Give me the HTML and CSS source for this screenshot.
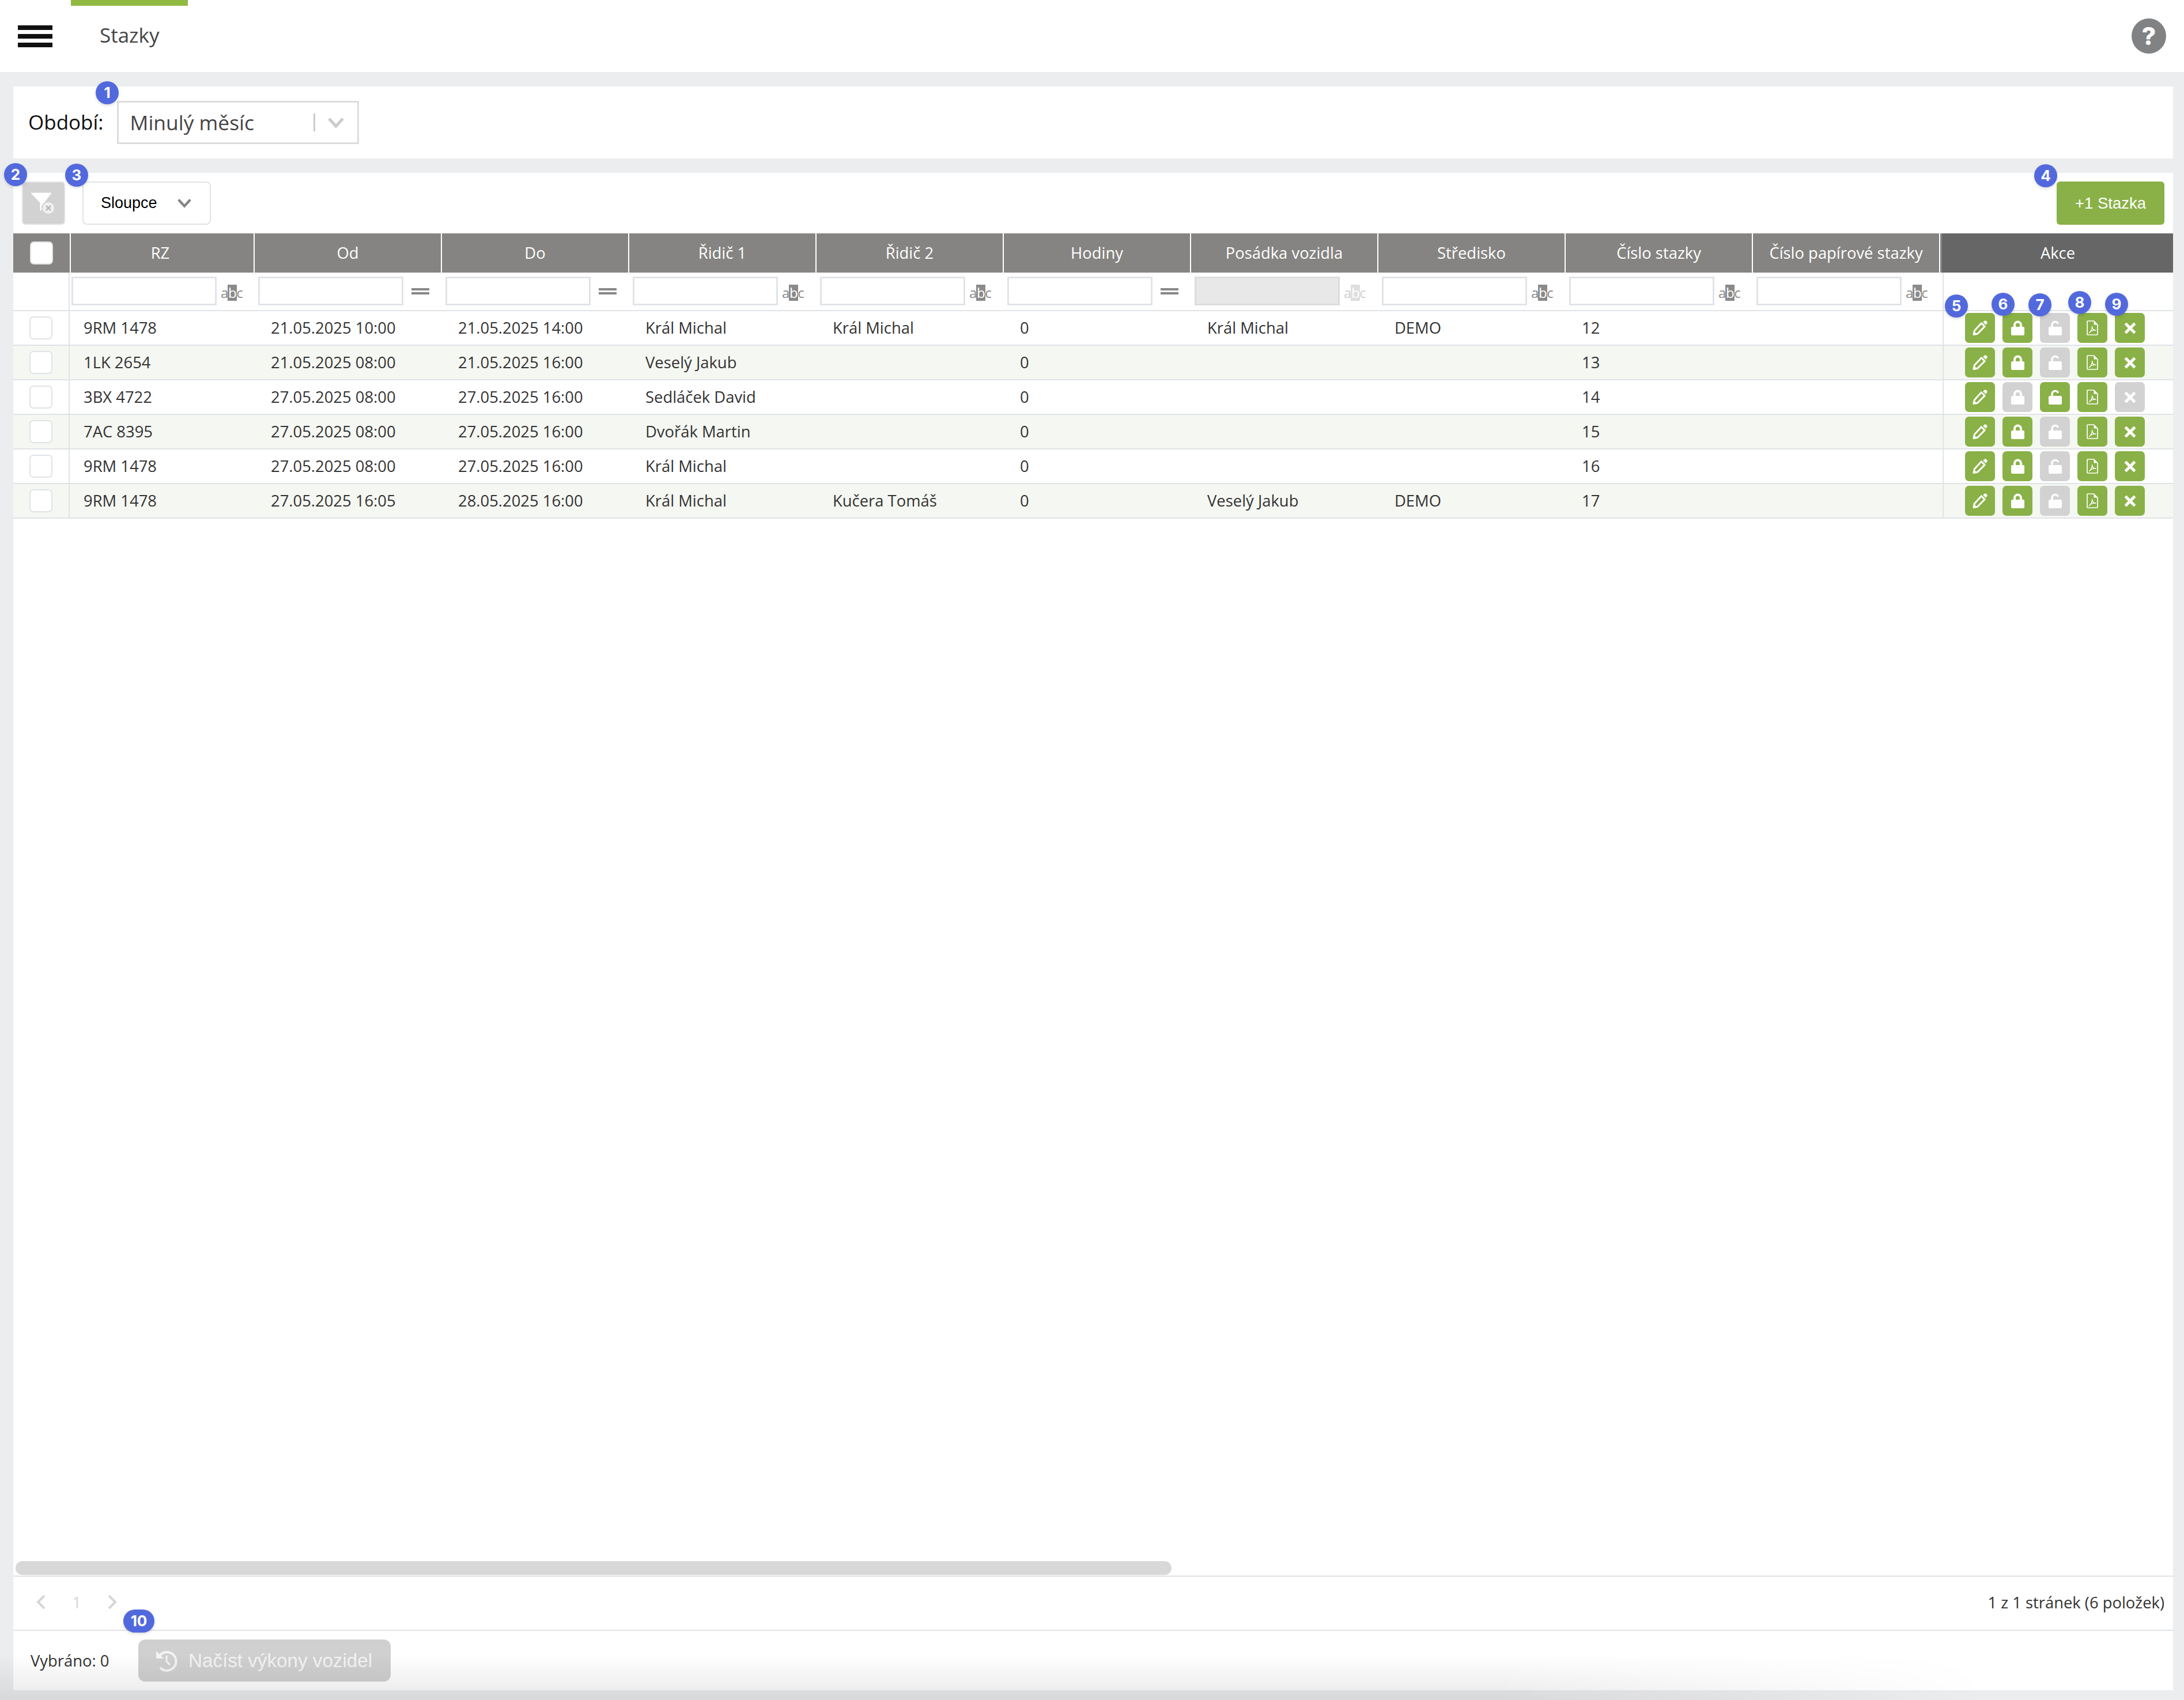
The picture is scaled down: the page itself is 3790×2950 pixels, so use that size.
FILE: index.html
```html
<!DOCTYPE html>
<html>
<head>
    <meta charset="utf-8">
    <title>Stazky</title>
    <link rel="stylesheet" href="styles.css">
</head>
<body>
    <svg class="icon-defs">
        <defs>
            <symbol id="i-pencil" viewBox="0 0 26 26">
                <path d="M18.200 3l2.300-2a2.400 2.400 0 0 1 3.300 0l1.100 1.100a2.400 2.400 0 0 1 0 3.300l-2 2.300z" fill="#fff"/>
                <path d="M15.400 4.800l5.800 5.800L8.600 23.200l-6.600 1.300 1.300-6.600z" fill="none" stroke="#fff" stroke-width="3" stroke-linejoin="round"/>
                <path d="M1 25l1.400-6.500 5 5z" fill="#fff"/>
            </symbol>
            <symbol id="i-lock" viewBox="0 0 23 26">
                <path d="M6 12V8a5.500 5.500 0 0 1 11 0v4" fill="none" stroke="#fff" stroke-width="4"/>
                <rect x="0" y="11" width="23" height="15" rx="2" fill="#fff"/>
            </symbol>
            <symbol id="i-unlock" viewBox="0 0 23 26">
                <path d="M6 12V8a5.500 5.500 0 0 1 10.600-2.200" fill="none" stroke="#fff" stroke-width="3.400"/>
                <rect x="0" y="11" width="23" height="15" rx="2" fill="#fff"/>
            </symbol>
            <symbol id="i-pdf" viewBox="0 0 20 26">
                <path d="M2 1h10.500l6.500 6.500V24a1 1 0 0 1-1 1H2a1 1 0 0 1-1-1V2a1 1 0 0 1 1-1z" fill="none" stroke="#fff" stroke-width="1.700"/>
                <path d="M12.500 1v6.500H19z" fill="#fff"/>
                <path d="M4.500 21.500C7.500 19.500 10.500 14 9.500 10.500 9.800 14 12 17 16 17.200 12.500 16.800 7.500 18 4.500 21.500z" fill="none" stroke="#fff" stroke-width="1.400" stroke-linejoin="round"/>
            </symbol>
            <symbol id="i-close" viewBox="0 0 18 18">
                <path d="M2 2l14 14M16 2L2 16" fill="none" stroke="#fff" stroke-width="4.200"/>
            </symbol>
            <symbol id="i-chevron" viewBox="0 0 30 20">
                <path d="M3 3l12 13L27 3" fill="none" stroke="currentColor" stroke-width="5"/>
            </symbol>
        </defs>
    </svg>

    <header class="top-bar">
        <div class="menu-button">
            <span class="menu-line"></span>
            <span class="menu-line"></span>
            <span class="menu-line"></span>
        </div>
        <div class="page-tab">Stazky</div>
        <div class="help-button">?</div>
    </header>

    <section class="period-panel">
        <label class="period-label">Období:</label>
        <div class="period-select">
            <span class="period-value">Minulý měsíc</span>
            <span class="period-sep"></span>
            <svg class="period-arrow"><use href="#i-chevron"/></svg>
        </div>
    </section>

    <section class="grid-panel">
        <div class="toolbar">
            <div class="filter-button">
                <svg class="filter-icon" width="42" height="38" viewBox="0 0 42 38">
                    <path d="M1 1h35l-13 17v11l-6 2V18z" fill="#fff" stroke="#fff" stroke-width="1" stroke-linejoin="round"/>
                    <circle cx="31" cy="27" r="11" fill="#f0f0f0" stroke="#d2d2d2" stroke-width="2"/>
                    <path d="M27 23l8 8M35 23l-8 8" stroke="#b8b8b8" stroke-width="2.500"/>
                </svg>
            </div>
            <div class="columns-button">
                <span>Sloupce</span>
                <svg class="columns-arrow"><use href="#i-chevron"/></svg>
            </div>
            <div class="add-button">+1 Stazka</div>
        </div>

        <div class="tbl-row tbl-head">
            <div class="th th-check"><span class="checkbox"></span></div>
            <div class="th th-rz">RZ</div>
            <div class="th">Od</div>
            <div class="th">Do</div>
            <div class="th">Řidič 1</div>
            <div class="th">Řidič 2</div>
            <div class="th">Hodiny</div>
            <div class="th">Posádka vozidla</div>
            <div class="th">Středisko</div>
            <div class="th">Číslo stazky</div>
            <div class="th">Číslo papírové stazky</div>
            <div class="th th-actions">Akce</div>
        </div>

        <div class="tbl-row tbl-filter">
            <div class="cell-check"></div>
            <div class="fc fc-rz"><input class="fi" type="text"><span class="abc">a<b>b</b>c</span></div>
            <div class="fc"><input class="fi" type="text"><span class="eq"></span></div>
            <div class="fc"><input class="fi" type="text"><span class="eq"></span></div>
            <div class="fc"><input class="fi" type="text"><span class="abc">a<b>b</b>c</span></div>
            <div class="fc"><input class="fi" type="text"><span class="abc">a<b>b</b>c</span></div>
            <div class="fc"><input class="fi" type="text"><span class="eq"></span></div>
            <div class="fc"><input class="fi" type="text" disabled><span class="abc abc-off">a<b>b</b>c</span></div>
            <div class="fc"><input class="fi" type="text"><span class="abc">a<b>b</b>c</span></div>
            <div class="fc"><input class="fi" type="text"><span class="abc">a<b>b</b>c</span></div>
            <div class="fc"><input class="fi" type="text"><span class="abc">a<b>b</b>c</span></div>
            <div class="cell-actions"></div>
        </div>

        <div class="tbl-row">
            <div class="cell-check"><span class="checkbox"></span></div>
            <div class="td td-rz">9RM 1478</div><div class="td">21.05.2025 10:00</div><div class="td">21.05.2025 14:00</div>
            <div class="td">Král Michal</div><div class="td">Král Michal</div><div class="td">0</div>
            <div class="td">Král Michal</div><div class="td">DEMO</div><div class="td">12</div><div class="td"></div>
            <div class="cell-actions">
                <span class="act"><svg class="ic-pencil"><use href="#i-pencil"/></svg></span>
                <span class="act"><svg class="ic-lock"><use href="#i-lock"/></svg></span>
                <span class="act act-off"><svg class="ic-lock"><use href="#i-unlock"/></svg></span>
                <span class="act"><svg class="ic-pdf"><use href="#i-pdf"/></svg></span>
                <span class="act"><svg class="ic-close"><use href="#i-close"/></svg></span>
            </div>
        </div>
        <div class="tbl-row row-alt">
            <div class="cell-check"><span class="checkbox"></span></div>
            <div class="td td-rz">1LK 2654</div><div class="td">21.05.2025 08:00</div><div class="td">21.05.2025 16:00</div>
            <div class="td">Veselý Jakub</div><div class="td"></div><div class="td">0</div>
            <div class="td"></div><div class="td"></div><div class="td">13</div><div class="td"></div>
            <div class="cell-actions">
                <span class="act"><svg class="ic-pencil"><use href="#i-pencil"/></svg></span>
                <span class="act"><svg class="ic-lock"><use href="#i-lock"/></svg></span>
                <span class="act act-off"><svg class="ic-lock"><use href="#i-unlock"/></svg></span>
                <span class="act"><svg class="ic-pdf"><use href="#i-pdf"/></svg></span>
                <span class="act"><svg class="ic-close"><use href="#i-close"/></svg></span>
            </div>
        </div>
        <div class="tbl-row">
            <div class="cell-check"><span class="checkbox"></span></div>
            <div class="td td-rz">3BX 4722</div><div class="td">27.05.2025 08:00</div><div class="td">27.05.2025 16:00</div>
            <div class="td">Sedláček David</div><div class="td"></div><div class="td">0</div>
            <div class="td"></div><div class="td"></div><div class="td">14</div><div class="td"></div>
            <div class="cell-actions">
                <span class="act"><svg class="ic-pencil"><use href="#i-pencil"/></svg></span>
                <span class="act act-off"><svg class="ic-lock"><use href="#i-lock"/></svg></span>
                <span class="act"><svg class="ic-lock"><use href="#i-unlock"/></svg></span>
                <span class="act"><svg class="ic-pdf"><use href="#i-pdf"/></svg></span>
                <span class="act act-off"><svg class="ic-close"><use href="#i-close"/></svg></span>
            </div>
        </div>
        <div class="tbl-row row-alt">
            <div class="cell-check"><span class="checkbox"></span></div>
            <div class="td td-rz">7AC 8395</div><div class="td">27.05.2025 08:00</div><div class="td">27.05.2025 16:00</div>
            <div class="td">Dvořák Martin</div><div class="td"></div><div class="td">0</div>
            <div class="td"></div><div class="td"></div><div class="td">15</div><div class="td"></div>
            <div class="cell-actions">
                <span class="act"><svg class="ic-pencil"><use href="#i-pencil"/></svg></span>
                <span class="act"><svg class="ic-lock"><use href="#i-lock"/></svg></span>
                <span class="act act-off"><svg class="ic-lock"><use href="#i-unlock"/></svg></span>
                <span class="act"><svg class="ic-pdf"><use href="#i-pdf"/></svg></span>
                <span class="act"><svg class="ic-close"><use href="#i-close"/></svg></span>
            </div>
        </div>
        <div class="tbl-row">
            <div class="cell-check"><span class="checkbox"></span></div>
            <div class="td td-rz">9RM 1478</div><div class="td">27.05.2025 08:00</div><div class="td">27.05.2025 16:00</div>
            <div class="td">Král Michal</div><div class="td"></div><div class="td">0</div>
            <div class="td"></div><div class="td"></div><div class="td">16</div><div class="td"></div>
            <div class="cell-actions">
                <span class="act"><svg class="ic-pencil"><use href="#i-pencil"/></svg></span>
                <span class="act"><svg class="ic-lock"><use href="#i-lock"/></svg></span>
                <span class="act act-off"><svg class="ic-lock"><use href="#i-unlock"/></svg></span>
                <span class="act"><svg class="ic-pdf"><use href="#i-pdf"/></svg></span>
                <span class="act"><svg class="ic-close"><use href="#i-close"/></svg></span>
            </div>
        </div>
        <div class="tbl-row row-alt">
            <div class="cell-check"><span class="checkbox"></span></div>
            <div class="td td-rz">9RM 1478</div><div class="td">27.05.2025 16:05</div><div class="td">28.05.2025 16:00</div>
            <div class="td">Král Michal</div><div class="td">Kučera Tomáš</div><div class="td">0</div>
            <div class="td">Veselý Jakub</div><div class="td">DEMO</div><div class="td">17</div><div class="td"></div>
            <div class="cell-actions">
                <span class="act"><svg class="ic-pencil"><use href="#i-pencil"/></svg></span>
                <span class="act"><svg class="ic-lock"><use href="#i-lock"/></svg></span>
                <span class="act act-off"><svg class="ic-lock"><use href="#i-unlock"/></svg></span>
                <span class="act"><svg class="ic-pdf"><use href="#i-pdf"/></svg></span>
                <span class="act"><svg class="ic-close"><use href="#i-close"/></svg></span>
            </div>
        </div>

        <div class="grid-space"></div>

        <div class="scroll-track"><div class="scroll-thumb"></div></div>

        <div class="pager">
            <div class="pager-nav">
                <svg width="18" height="26" viewBox="0 0 18 26"><path d="M15 2L4 13l11 11" fill="none" stroke="#d6d6d6" stroke-width="4"/></svg>
                <span class="pager-num">1</span>
                <svg width="18" height="26" viewBox="0 0 18 26"><path d="M3 2l11 11L3 24" fill="none" stroke="#d6d6d6" stroke-width="4"/></svg>
            </div>
            <div class="pager-info">1 z 1 stránek (6 položek)</div>
        </div>

        <div class="bottom-bar">
            <span class="selected-count">Vybráno: 0</span>
            <div class="load-button">
                <svg width="40" height="40" viewBox="0 0 40 40">
                    <path d="M8 11A16 16 0 1 1 9 32" fill="none" stroke="#f4f4f4" stroke-width="4"/>
                    <path d="M2 3v13h13z" fill="#f4f4f4"/>
                    <path d="M20 11v10l6 6" fill="none" stroke="#f4f4f4" stroke-width="3"/>
                </svg>
                <span>Načíst výkony vozidel</span>
            </div>
        </div>
    </section>

    <span class="badge b1">1</span>
    <span class="badge b2">2</span>
    <span class="badge b3">3</span>
    <span class="badge b4">4</span>
    <span class="badge b5">5</span>
    <span class="badge b6">6</span>
    <span class="badge b7">7</span>
    <span class="badge b8">8</span>
    <span class="badge b9">9</span>
    <span class="badge b10">10</span>

    <div class="window-shade"></div>
</body>
</html>
```
FILE: styles.css
```css
* {
    box-sizing: border-box;
}

body {
    position: relative;
    display: flex;
    flex-direction: column;
    height: 100vh;
    margin: 0;
    overflow: hidden;
    background-color: #ecedef;
    font-family: "Open Sans", sans-serif;
    font-size: 27.4px;
    color: #333;
}

.icon-defs {
    position: absolute;
    width: 0;
    height: 0;
}

/* Top bar */
.top-bar {
    display: flex;
    align-items: stretch;
    height: 125px;
    background-color: #fff;
}

.menu-button {
    display: flex;
    flex-direction: column;
    gap: 7px;
    width: 123px;
    padding: 44px 0 0 31px;
}

.menu-line {
    width: 60px;
    height: 8px;
    background-color: #111;
}

.page-tab {
    width: 203px;
    padding: 31px 0 0 50px;
    border-top: 10px solid #91ba43;
    font-size: 35px;
    line-height: 40px;
    color: #444;
}

.help-button {
    width: 60px;
    height: 61px;
    margin: 32px 31px 0 auto;
    border-radius: 50%;
    background-color: #808284;
    color: #fff;
    font-family: Inter, sans-serif;
    font-size: 43px;
    font-weight: 800;
    line-height: 61px;
    text-align: center;
}

/* Period panel */
.period-panel {
    display: flex;
    align-items: center;
    gap: 23px;
    height: 125px;
    margin: 25px 19px 0 23px;
    padding-left: 26px;
    background-color: #fff;
}

.period-label {
    margin-bottom: 2px;
    font-size: 35px;
    color: #111;
}

.period-select {
    display: flex;
    align-items: center;
    width: 420px;
    height: 75px;
    padding-left: 20px;
    border: 3px solid #ddd;
    font-size: 35.400px;
    color: #444;
}

.period-value {
    width: 318px;
    margin-bottom: 2px;
}

.period-sep {
    width: 3px;
    height: 31px;
    background-color: #ccc;
}

.period-arrow {
    width: 30px;
    height: 20px;
    margin-left: 21px;
    color: #ccc;
}

/* Grid panel */
.grid-panel {
    display: flex;
    flex-direction: column;
    flex: 1;
    margin: 25px 19px 17px 23px;
    background-color: #fff;
}

.toolbar {
    display: flex;
    align-items: flex-start;
    height: 105px;
    padding: 15px 15px 0;
}

.filter-button {
    display: flex;
    align-items: center;
    justify-content: center;
    width: 75px;
    height: 75px;
    border: 2px solid #dfe2e5;
    border-radius: 6px;
    background-color: #d2d2d2;
}

.filter-icon {
    margin-right: 3px;
}

.columns-button {
    display: flex;
    align-items: center;
    width: 223px;
    height: 75px;
    margin-left: 30px;
    padding-left: 30px;
    border: 2px solid #e0e3e6;
    border-radius: 8px;
    font-family: "Liberation Sans", sans-serif;
    font-size: 27px;
    color: #000;
}

.columns-arrow {
    width: 26px;
    height: 17px;
    margin-left: 34px;
    color: #848484;
}

.add-button {
    width: 187px;
    height: 75px;
    margin-left: auto;
    border-radius: 6px;
    background-color: #89b147;
    color: #fff;
    font-family: "Liberation Sans", sans-serif;
    font-size: 27.500px;
    line-height: 75px;
    text-align: center;
}

/* Table */
.tbl-row {
    display: grid;
    grid-template-columns: 98px 319px repeat(9, 325px) 1fr;
    flex: none;
    height: 60px;
    border-bottom: 2px solid #e0e3e6;
}

.row-alt {
    background-color: #f5f7f2;
}

.tbl-head {
    height: 68px;
    border-bottom: 0;
}

.th {
    border-left: 2px solid #fff;
    background-color: #858482;
    color: #fff;
    font-size: 27.4px;
    line-height: 68px;
    text-align: center;
    white-space: nowrap;
}

.th-rz {
    padding-right: 7px;
}

.th-check {
    display: flex;
    align-items: center;
    justify-content: center;
    border-left: 0;
}

.th-actions {
    padding-left: 4px;
    background-color: #666;
    box-shadow: inset 3px 0 0 #858482;
}

.checkbox {
    display: block;
    width: 40px;
    height: 40px;
    border: 2px solid #e0e3e6;
    border-radius: 7px;
    background-color: #fff;
}

.cell-check {
    display: flex;
    align-items: center;
    justify-content: center;
    border-right: 2px solid #e0e3e6;
}

.tbl-filter {
    height: 67px;
}

.fc {
    display: flex;
    padding: 7px 0 0 8px;
}

.fc-rz {
    padding-left: 3px;
}

.fi {
    width: 252px;
    height: 50px;
    padding: 0;
    border: 3px solid #e1e4e8;
    background-color: #fff;
}

.fi:disabled {
    border-color: #dcdcdc;
    background-color: #e8e8e8;
}

.abc {
    height: 28px;
    margin: 14px 0 0 7px;
    color: #8a8a8a;
    font-size: 24px;
    line-height: 28px;
    white-space: nowrap;
}

.abc b {
    display: inline-block;
    width: 16px;
    height: 28px;
    margin: 0 -1px;
    background-color: #8a8a8a;
    color: #fff;
    font-weight: 400;
    text-align: center;
}

.abc-off {
    color: #cfcfcf;
}

.abc-off b {
    background-color: #dedede;
}

.eq {
    width: 31px;
    height: 11px;
    margin: 20px 0 0 14px;
    border-top: 4px solid #888;
    border-bottom: 4px solid #888;
}

.td {
    padding-left: 30px;
    line-height: 58px;
    white-space: nowrap;
}

.td-rz {
    padding-left: 24px;
}

.cell-actions {
    display: flex;
    align-items: center;
    gap: 13px;
    margin-left: 6px;
    padding-left: 37px;
    border-left: 2px solid #e0e3e6;
}

.act {
    display: flex;
    align-items: center;
    justify-content: center;
    width: 52px;
    height: 52px;
    border-radius: 7px;
    background-color: #89b147;
}

.act-off {
    background-color: #d2d2d2;
}

.ic-pencil {
    width: 26px;
    height: 26px;
}

.ic-lock {
    width: 23px;
    height: 26px;
}

.ic-pdf {
    width: 20px;
    height: 26px;
}

.ic-close {
    width: 21px;
    height: 21px;
}

.grid-space {
    flex: 1;
}

/* Footer */
.scroll-track {
    flex: none;
    height: 27px;
    padding: 0 0 1px 4px;
    border-bottom: 2px solid #e0e3e6;
}

.scroll-thumb {
    width: 2006px;
    height: 24px;
    border-radius: 12px;
    background-color: #d8d8d8;
}

.pager {
    display: flex;
    flex: none;
    align-items: center;
    justify-content: space-between;
    height: 94px;
    padding: 0 15px 0 39px;
    border-bottom: 2px solid #e0e3e6;
}

.pager-nav {
    display: flex;
    align-items: center;
    gap: 45px;
    margin-bottom: 4px;
}

.pager-num {
    width: 16px;
    color: #d6d6d6;
    text-align: center;
}

.pager-info {
    margin-bottom: 4px;
    color: #333;
}

.bottom-bar {
    display: flex;
    flex: none;
    align-items: center;
    height: 103px;
    padding-left: 30px;
}

.selected-count {
    width: 187px;
}

.load-button {
    display: flex;
    align-items: center;
    gap: 18px;
    width: 438px;
    height: 73px;
    padding-left: 29px;
    border-radius: 12px;
    background-color: #d0d0d0;
    color: #f4f4f4;
    font-family: "Liberation Sans", sans-serif;
    font-size: 33.200px;
}

/* Numbered markers lying over the page */
.badge {
    position: absolute;
    width: 40px;
    height: 40px;
    border-radius: 20px;
    background-color: #5269dd;
    box-shadow: 0 2px 5px rgba(0, 0, 0, 0.15);
    color: #fff;
    font-family: Inter, sans-serif;
    font-size: 26px;
    font-weight: 700;
    line-height: 40px;
    text-align: center;
}

.b1 { left: 166px; top: 141px; }
.b2 { left: 7px; top: 283px; }
.b3 { left: 113px; top: 284px; }
.b4 { left: 3530px; top: 285px; }
.b5 { left: 3375px; top: 511px; }
.b6 { left: 3456px; top: 508px; }
.b7 { left: 3520px; top: 509px; }
.b8 { left: 3589px; top: 505px; }
.b9 { left: 3653px; top: 508px; }
.b10 { left: 214px; top: 2793px; width: 54px; }

/* Soft shadow along the bottom edge of the window */
.window-shade {
    position: absolute;
    left: 0;
    bottom: 0;
    width: 3450px;
    height: 80px;
    background: linear-gradient(to top, rgba(0, 0, 0, 0.085), rgba(0, 0, 0, 0));
    -webkit-mask-image: linear-gradient(to right, #000 75%, transparent);
    mask-image: linear-gradient(to right, #000 75%, transparent);
    pointer-events: none;
}
```
